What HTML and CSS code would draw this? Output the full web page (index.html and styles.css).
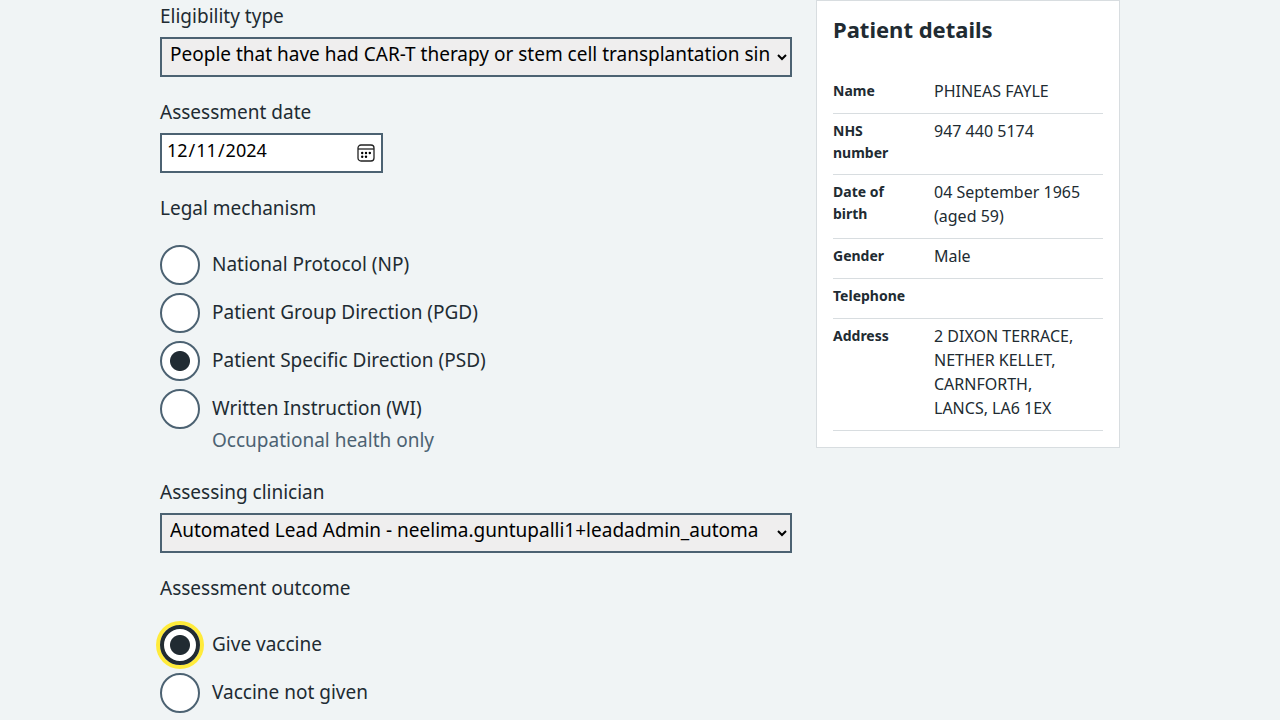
FILE: index.html
```html
<!DOCTYPE html>
<html lang="en">
<head>
<meta charset="utf-8">
<meta name="viewport" content="width=device-width, initial-scale=1">
<title>Assessment</title>
<link rel="stylesheet" href="styles.css">
</head>
<body>
<main class="page">
  <form class="form">
    <div class="group">
      <label class="label" for="eligibility">Eligibility type</label>
      <select class="control select" id="eligibility">
        <option>People that have had CAR-T therapy or stem cell transplantation since</option>
      </select>
    </div>
    <div class="group">
      <label class="label" for="date">Assessment date</label>
      <input class="control date" id="date" type="date" value="2024-12-11">
    </div>
    <fieldset class="group">
      <legend class="label">Legal mechanism</legend>
      <div class="radios">
        <div class="radio"><input type="radio" name="legal" id="np"><label for="np">National Protocol (NP)</label></div>
        <div class="radio"><input type="radio" name="legal" id="pgd"><label for="pgd">Patient Group Direction (PGD)</label></div>
        <div class="radio"><input type="radio" name="legal" id="psd" checked><label for="psd">Patient Specific Direction (PSD)</label></div>
        <div class="radio"><input type="radio" name="legal" id="wi" aria-describedby="wi-hint"><label for="wi">Written Instruction (WI)</label><div class="hint" id="wi-hint">Occupational health only</div></div>
      </div>
    </fieldset>
    <div class="group">
      <label class="label" for="clinician">Assessing clinician</label>
      <select class="control select" id="clinician">
        <option>Automated Lead Admin - neelima.guntupalli1+leadadmin_automa</option>
      </select>
    </div>
    <fieldset class="group">
      <legend class="label">Assessment outcome</legend>
      <div class="radios">
        <div class="radio"><input class="focused" type="radio" name="outcome" id="give" checked><label for="give">Give vaccine</label></div>
        <div class="radio"><input type="radio" name="outcome" id="not-given"><label for="not-given">Vaccine not given</label></div>
      </div>
    </fieldset>
  </form>
  <aside class="card">
    <h2 class="card-title">Patient details</h2>
    <dl class="summary">
      <div class="row"><dt>Name</dt><dd>PHINEAS FAYLE</dd></div>
      <div class="row"><dt>NHS number</dt><dd>947 440 5174</dd></div>
      <div class="row"><dt>Date of birth</dt><dd>04 September 1965 (aged 59)</dd></div>
      <div class="row"><dt>Gender</dt><dd>Male</dd></div>
      <div class="row"><dt>Telephone</dt><dd></dd></div>
      <div class="row"><dt>Address</dt><dd>2 DIXON TERRACE,<br>NETHER KELLET,<br>CARNFORTH,<br>LANCS, LA6 1EX</dd></div>
    </dl>
  </aside>
</main>
</body>
</html>
```
FILE: styles.css
```css
* { box-sizing: border-box; }
body {
  margin: 0;
  background: #f0f4f5;
  color: #212b32;
  font-family: "Noto Sans", "Open Sans", sans-serif;
  font-size: 19px;
}
.page {
  display: grid;
  grid-template-columns: repeat(3, minmax(0, 1fr));
  gap: 24px;
  align-items: start;
  max-width: 960px;
  margin: 0 auto;
}
.form { grid-column: span 2; padding-top: 5px; }
.group { border: 0; margin: 0 0 24px; padding: 0; min-width: 0; }
.label { display: block; line-height: 22px; margin: 0 0 10px; padding: 0; }
.control {
  display: block;
  height: 40px;
  border: 2px solid #4c6272;
  border-radius: 0;
  color: #000;
  font: inherit;
  padding: 0 4px;
}
.select { width: 100%; background-color: #efeeee; padding-bottom: 6px; }
.date {
  width: 223px;
  background: #fff;
  font-size: 18px;
}
.date::-webkit-datetime-edit { padding: 0 0 6px; }
.date::-webkit-calendar-picker-indicator {
  width: 18px;
  height: 18px;
  padding: 0;
  margin-right: 2px;
  background: url("data:image/svg+xml,%3Csvg xmlns='http://www.w3.org/2000/svg' viewBox='0 0 18 18'%3E%3Crect x='1' y='1' width='16' height='16' rx='3' fill='none' stroke='%23222' stroke-width='1.3'/%3E%3Cpath d='M1 5h16' stroke='%23222' stroke-width='1.3'/%3E%3Cg fill='%23000'%3E%3Ccircle cx='5.2' cy='9' r='1.2'/%3E%3Ccircle cx='9' cy='9' r='1.2'/%3E%3Ccircle cx='12.8' cy='9' r='1.2'/%3E%3Ccircle cx='5.2' cy='12.7' r='1.2'/%3E%3Ccircle cx='9' cy='12.7' r='1.2'/%3E%3C/g%3E%3C/svg%3E") center / 18px no-repeat;
}
.radios { display: grid; gap: 8px; padding-top: 16px; }
.radio {
  display: grid;
  grid-template-columns: 40px 1fr;
  column-gap: 12px;
}
.radio label { line-height: 38px; }
.radio input {
  appearance: none;
  width: 40px;
  height: 40px;
  margin: 0;
  border: 2px solid #4c6272;
  border-radius: 50%;
  background: #fff;
}
.radio input:checked { background: radial-gradient(circle, #212b32 9.5px, #fff 10.5px); }
.radio .focused { border: 4px solid #212b32; box-shadow: 0 0 0 4px #ffeb3b; }
.hint { grid-column: 2; color: #4c6272; line-height: 22px; margin-bottom: 6px; }
.card {
  background: #fff;
  border: 1px solid #d8dde0;
  padding: 16px;
}
.card-title { font-size: 22px; line-height: 24px; margin: 0 0 33px; }
.summary { margin: 0; }
.row {
  display: grid;
  grid-template-columns: 30% 1fr;
  column-gap: 20px;
  padding: 5px 0 10px;
  border-bottom: 1px solid #d8dde0;
}
.row dt { font-size: 14px; font-weight: 700; line-height: 22px; padding-top: 1px; }
.row dd { margin: 0; font-size: 16px; line-height: 24px; min-height: 24px; }
```
